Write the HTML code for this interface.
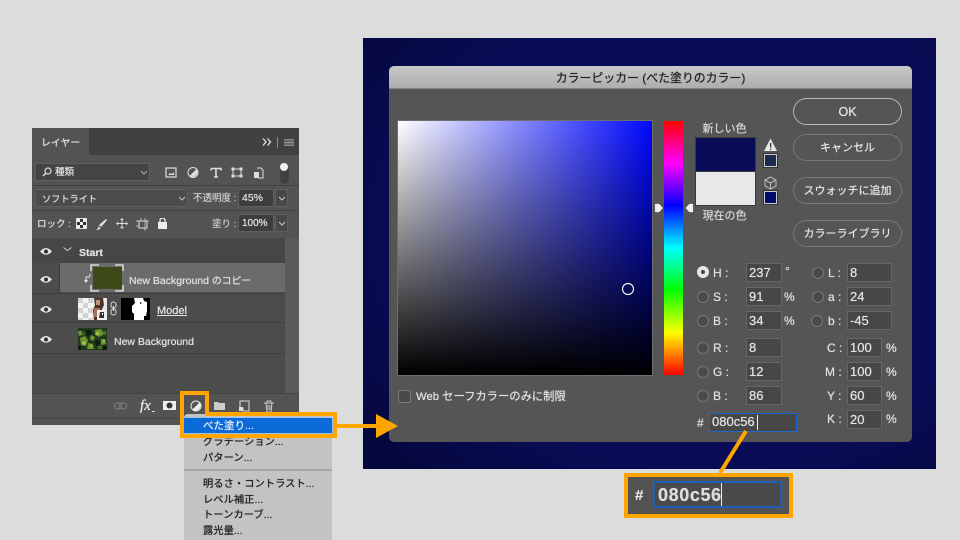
<!DOCTYPE html>
<html lang="ja"><head><meta charset="utf-8"><title>カラーピッカー</title>
<style>
html,body{margin:0;padding:0;width:960px;height:540px;overflow:hidden;background:#dcdcdc}
body{position:relative;font-family:"Liberation Sans","Noto Sans CJK JP",sans-serif;color:#e2e2e2;text-shadow:0 0 .6px currentColor}
div,span.a,svg{position:absolute}
.t{white-space:nowrap;font-size:11px;line-height:14px}
.b{font-weight:bold}
.f{background:#474747;border:1px solid #666;box-sizing:border-box;font-size:13px;line-height:17px;padding-left:2px;color:#e4e4e4;height:19px}
.r{width:12px;height:12px;border-radius:50%;border:1px solid #777;box-sizing:border-box;background:#4a4a4a}
.btn{left:793px;width:109px;height:27px;border:1.5px solid #767676;border-radius:14px;box-sizing:border-box;text-align:center;font-size:11px;line-height:26px;color:#e6e6e6}
.l{font-size:12px;line-height:14px;color:#e0e0e0;white-space:nowrap}
.m{left:203px;font-size:10.3px;line-height:14px;color:#1d1d1d;white-space:nowrap}
.o{background:#ffa500}
.sep{background:#434343;height:1px}
.dd{background:#484848;border:1px solid #5f5f5f;box-sizing:border-box;border-radius:2px}
</style></head><body>

<!-- Layers panel -->
<div style="left:32px;top:128px;width:267px;height:297px;background:#535353"></div>
<div style="left:89px;top:128px;width:210px;height:27px;background:#414141"></div>
<div class="t" style="left:41px;top:137px;font-size:9.9px">レイヤー</div>
<svg style="left:262px;top:137px" width="10" height="10" fill="none" stroke="#e4e4e4" stroke-width="1.300"><path d="M1 1.500l3 3.500-3 3.500M5.500 1.500l3 3.500-3 3.500"/></svg>
<div style="left:277px;top:137px;width:1px;height:11px;background:#888"></div>
<div style="left:284px;top:139px;width:10px;height:7px;background:linear-gradient(#8e8e8e 1px,#666 1px,#666 3px,#8e8e8e 3px,#8e8e8e 4px,#666 4px,#666 6px,#8e8e8e 6px)"></div>
<div class="dd" style="left:35px;top:163px;width:115px;height:18px;background:#444"></div>
<svg style="left:42px;top:167px" width="10" height="10" viewBox="0 0 10 10"><circle cx="6" cy="4" r="3" fill="none" stroke="#ddd" stroke-width="1.2"/><path d="M4 6L1 9" stroke="#ddd" stroke-width="1.4"/></svg>
<div class="t" style="left:55px;top:166px;font-size:9.5px">種類</div>
<svg style="left:140px;top:170px" width="8" height="5"><path d="M1 1l3 3 3-3" fill="none" stroke="#aaa"/></svg>
<!-- filter icons -->
<svg style="left:165px;top:167px" width="120" height="22" viewBox="0 0 120 22" fill="none" stroke="#ddd">
<rect x="1" y="1" width="10" height="9" stroke-width="1.2"/><path d="M3 8l2-2 2 1 2-2v3z" fill="#ddd" stroke="none"/>
<circle cx="28" cy="5.500" r="5" stroke-width="1"/><path d="M24.500 9L31.500 2A5 5 0 0 1 24.500 9z" fill="#ddd" stroke="none"/>
<path d="M46 1.500h10v2M51 1.500v8.500M49 10h4M46 1.500v2" stroke-width="1.600"/>
<rect x="68" y="2" width="8" height="7" stroke-width="1"/><rect x="66.500" y=".5" width="3" height="3" fill="#ddd" stroke="none"/><rect x="74.500" y=".5" width="3" height="3" fill="#ddd" stroke="none"/><rect x="66.500" y="7.500" width="3" height="3" fill="#ddd" stroke="none"/><rect x="74.500" y="7.500" width="3" height="3" fill="#ddd" stroke="none"/>
<path d="M92 1h4l2 2v8h-5" stroke-width="1"/><rect x="89" y="5" width="5" height="6" fill="#ddd" stroke="none"/>
</svg>
<div style="left:280px;top:165px;width:7px;height:17px;border-radius:4px;background:#3f3f3f;border:1px solid #444"></div>
<div style="left:280px;top:163px;width:8px;height:8px;border-radius:50%;background:#eee"></div>
<div class="sep" style="left:32px;top:185px;width:267px"></div>
<div class="dd" style="left:35px;top:189px;width:153px;height:18px;background:#4c4c4c"></div>
<div class="t" style="left:42px;top:192px;font-size:9.2px">ソフトライト</div>
<svg style="left:178px;top:196px" width="8" height="5"><path d="M1 1l3 3 3-3" fill="none" stroke="#bbb"/></svg>
<div class="t" style="left:193px;top:192px;font-size:9.500px;color:#ccc">不透明度 :</div>
<div class="dd" style="left:238px;top:189px;width:36px;height:18px;background:#3d3d3d"></div>
<div class="t" style="left:242px;top:191px;font-size:10.500px">45%</div>
<div class="dd" style="left:275px;top:189px;width:13px;height:18px"></div>
<svg style="left:278px;top:196px" width="8" height="5"><path d="M1 1l3 3 3-3" fill="none" stroke="#ccc"/></svg>
<div class="sep" style="left:32px;top:210px;width:267px"></div>
<div class="t" style="left:37px;top:218px;font-size:9.500px">ロック :</div>
<svg style="left:76px;top:218px" width="95" height="14" viewBox="0 0 95 14">
<rect x=".5" y=".5" width="10" height="10" fill="#333" stroke="#ddd"/><path d="M1 1h3v3H1zM7 1h3v3H7zM4 4h3v3H4zM1 7h3v3H1zM7 7h3v3H7z" fill="#eee"/>
<path d="M30 1Q26 4 23 7L25 9Q28 6 31 2zM22 8Q23 10 20 12 24 12 24.500 10z" fill="#ddd"/>
<path d="M46 0l2 2h-1.500v3H50V3.500l2 2-2 2V6h-3.500v3H48l-2 2-2-2h1.500V6H42v1.500l-2-2 2-2V5h3.500V2H44z" fill="#ddd"/>
<rect x="63" y="3" width="8" height="7" fill="none" stroke="#ddd"/><path d="M60 3h13M69 0v13M65 0v3M60 8h3" stroke="#ddd" stroke-width=".7" fill="none"/>
<rect x="82" y="4" width="9" height="7" fill="#eee"/><path d="M84 4V2.500a2.500 2.500 0 0 1 5 0V4" fill="none" stroke="#eee" stroke-width="1.300"/>
</svg>
<div class="t" style="left:212px;top:218px;font-size:9.500px;color:#ccc">塗り :</div>
<div class="dd" style="left:238px;top:214px;width:36px;height:18px;background:#3d3d3d"></div>
<div class="t" style="left:242px;top:217px;font-size:10px">100%</div>
<div class="dd" style="left:275px;top:214px;width:13px;height:18px"></div>
<svg style="left:278px;top:221px" width="8" height="5"><path d="M1 1l3 3 3-3" fill="none" stroke="#ccc"/></svg>

<!-- layers list -->
<div style="left:285px;top:238px;width:14px;height:155px;background:#5a5a5a"></div>
<div style="left:32px;top:238px;width:253px;height:25px;background:#464646"></div>
<div style="left:32px;top:263px;width:253px;height:131px;background:#4c4c4c"></div>
<div style="left:60px;top:263px;width:225px;height:29px;background:#6b6b6b"></div>
<div style="left:32px;top:293px;width:253px;height:1px;background:#3e3e3e"></div>
<div style="left:32px;top:322px;width:253px;height:1px;background:#3e3e3e"></div>
<div style="left:32px;top:353px;width:253px;height:1px;background:#3e3e3e"></div>
<div style="left:59px;top:263px;width:1px;height:30px;background:#3e3e3e"></div>
<svg style="left:40px;top:247px" width="14" height="100" viewBox="0 0 14 100" fill="#e2e2e2">
<g><path d="M0 4.500Q6-2.500 12 4.500 6 11 0 4.500z"/><circle cx="6" cy="4.500" r="2" fill="#333"/></g>
<g transform="translate(0,28)"><path d="M0 4.500Q6-2.500 12 4.500 6 11 0 4.500z"/><circle cx="6" cy="4.500" r="2" fill="#333"/></g>
<g transform="translate(0,58)"><path d="M0 4.500Q6-2.500 12 4.500 6 11 0 4.500z"/><circle cx="6" cy="4.500" r="2" fill="#333"/></g>
<g transform="translate(0,88)"><path d="M0 4.500Q6-2.500 12 4.500 6 11 0 4.500z"/><circle cx="6" cy="4.500" r="2" fill="#333"/></g>
</svg>
<svg style="left:63px;top:247px" width="9" height="5"><path d="M.5.5l4 3 4-3" fill="none" stroke="#ccc"/></svg>
<div class="t b" style="left:79px;top:246px;font-size:10.500px">Start</div>
<svg style="left:84px;top:273px" width="8" height="12"><path d="M6 1v2M6 4H2M2 4v5M.5 7L2 9l1.500-2" fill="none" stroke="#eee" stroke-width="1"/></svg>
<div style="left:93px;top:267px;width:29px;height:22px;background:#3b4a18"></div>
<svg style="left:90px;top:264px" width="34" height="28"><path d="M1 7V1h8M25 1h8v6M33 21v6h-8M9 27H1v-6" fill="none" stroke="#eee" stroke-width="1.300"/></svg>
<div class="t" style="left:129px;top:274px;font-size:10.500px">New Background <span style="font-size:9.800px">のコピー</span></div>

<div style="left:78px;top:298px;width:29px;height:22px;background:repeating-conic-gradient(#f4f4f4 0 25%,#d2d2d2 0 50%) 0 0/10px 10px"></div>
<svg style="left:78px;top:298px" width="29" height="22"><rect x="15" y="0" width="14" height="22" fill="#e8e8e8"/><path d="M16 0h9l1 7-2 4-1 11h-7l-1-10 2-5z" fill="#4a3528"/><rect x="18" y="2" width="4" height="5" fill="#c09070"/><rect x="16" y="10" width="6" height="9" fill="#a87058"/><rect x="19" y="12" width="10" height="10" fill="#f0f0f0"/><path d="M22 14h4v6h-5z" fill="#333"/><path d="M24 15h1v2h-1z" fill="#fff"/></svg>
<svg style="left:109px;top:301px" width="9" height="15"><rect x="2" y="1" width="5" height="6" rx="2.500" fill="none" stroke="#ddd"/><rect x="2" y="8" width="5" height="6" rx="2.500" fill="none" stroke="#ddd"/><path d="M4.500 5v5" stroke="#ddd"/></svg>
<div style="left:121px;top:298px;width:29px;height:22px;background:#000"></div>
<svg style="left:121px;top:298px" width="29" height="22"><path d="M13 0h9l1 3 3 1v9l-1 5h-2v4H13v-6l-2-2v-6l3-3z" fill="#fff"/><path d="M19 4l2 1-2 1z" fill="#000"/></svg>
<div class="t" style="left:157px;top:304px;font-size:11px;text-decoration:underline">Model</div>

<svg style="left:78px;top:328px" width="29" height="22" viewBox="0 0 29 22"><rect width="29" height="22" fill="#22381a"/>
<g fill="#6a9630"><path d="M2 10l5-2 3 4-2 6-5-1z"/><path d="M17 2l6-1 3 5-5 3-4-2z"/><path d="M10 15l5 1 1 5H9z"/><path d="M23 11l4 0 1 5-5 1z"/><path d="M0 3l4 0 0 4-3 1z"/><path d="M13 7l4 2-2 4-3-2z"/></g>
<g fill="#a2c04c"><path d="M5 13l3 1-1 3-3-1z"/><path d="M18 4l3 0 0 3-3 0z"/><path d="M12 17l2 0 0 2-2 0z"/><path d="M25 12l2 0 0 2-2 0z"/></g>
<g fill="#0f1a0a"><path d="M8 2l5 0 1 4-5 2z"/><path d="M17 13l4-1 1 4-4 2z"/><path d="M25 18l4 0 0 4-4 0z"/><path d="M0 18l3 0 0 4-3 0z"/></g>
<g fill="#44702a"><path d="M5 4l2 1-1 3-2-1z"/><path d="M25 3l3 0 0 4-3 0z"/><path d="M20 18l4 0 0 3-4 0z"/></g></svg>
<div class="t" style="left:114px;top:335px;font-size:10.500px">New Background</div>

<!-- Panel footer -->
<div style="left:32px;top:393px;width:267px;height:1px;background:#444"></div>
<div style="left:32px;top:418px;width:267px;height:1px;background:#444"></div>
<svg style="left:113px;top:398px" width="165" height="16" viewBox="0 0 165 16" fill="none">
<rect x="1.500" y="5" width="7" height="6" rx="3" stroke="#808080"/><rect x="6.500" y="5" width="7" height="6" rx="3" stroke="#808080"/>
<rect x="50" y="3" width="13" height="9" fill="#eee"/><circle cx="56.500" cy="7.500" r="3" fill="#333"/>
<circle cx="83" cy="8" r="5" stroke="#eee"/><path d="M79.500 11.500L86.500 4.500A5 5 0 0 1 79.500 11.500z" fill="#eee"/>
<path d="M101 4h4l1 1h6v7h-11z" fill="#ccc"/>
<path d="M127 3h9v10h-6v-3h-3z" stroke="#ddd"/><rect x="126" y="9" width="4" height="4" fill="#ddd"/>
<path d="M151 5h10M153 5l1 9h4l1-9M154 5V3h4v2M155 7v5M157 7v5" stroke="#ccc"/>
</svg>
<div class="t" style="left:140px;top:399px;font-size:15px;font-style:italic;font-family:'Liberation Serif',serif;color:#eee">fx</div>
<div style="left:152px;top:411px;width:3px;height:1px;background:#ddd"></div>

<!-- Menu -->
<div style="left:184px;top:414px;width:148px;height:126px;background:#c3c3c3;border-radius:4px 4px 0 0"></div>
<div style="left:184px;top:469px;width:148px;height:2px;background:#a6a6a6"></div>
<div class="m" style="top:436px">グラデーション...</div>
<div class="m" style="top:452px">パターン...</div>
<div class="m" style="top:478px">明るさ・コントラスト...</div>
<div class="m" style="top:494px">レベル補正...</div>
<div class="m" style="top:509px">トーンカーブ...</div>
<div class="m" style="top:525px">露光量...</div>
<div style="left:183px;top:417px;width:150px;height:17px;background:#0a6ad8;box-sizing:border-box;border:1px solid #9fbfe6"></div>
<div class="t" style="left:203px;top:419px;font-size:10.500px;color:#f2f2f2">べた塗り...</div>
<!-- Orange frames (merged outline) -->
<div class="o" style="left:180px;top:391px;width:29px;height:4px"></div>
<div class="o" style="left:180px;top:391px;width:4px;height:47px"></div>
<div class="o" style="left:205px;top:391px;width:4px;height:25px"></div>
<div class="o" style="left:205px;top:412px;width:132px;height:4px"></div>
<div class="o" style="left:333px;top:412px;width:4px;height:26px"></div>
<div class="o" style="left:180px;top:434px;width:157px;height:4px"></div>

<!-- Navy panel -->
<div style="left:363px;top:38px;width:573px;height:431px;background:radial-gradient(ellipse 75% 75% at 60% 45%,#080c56 70%,#05083f 100%)"></div>

<!-- Dialog -->
<div style="left:389px;top:66px;width:523px;height:376px;background:#555;border-radius:5px;overflow:hidden;z-index:1">
 <div style="left:0;top:0;width:523px;height:22px;background:linear-gradient(#c8c8c8,#aeaeae);border-bottom:1px solid #858585"></div>
 <div class="t" style="left:0;top:5px;width:523px;text-align:center;font-size:11.900px;color:#222">カラーピッカー (べた塗りのカラー)</div>
</div>

<div style="z-index:2;left:0;top:0;width:960px;height:540px">
 <!-- Field -->
 <div style="left:398px;top:121px;width:254px;height:254px;background:linear-gradient(to top,#000,rgba(0,0,0,0)),linear-gradient(to right,#fff,#0008ff);box-shadow:0 0 0 1px #6e6e6e"></div>
 <svg style="left:620px;top:281px" width="16" height="16"><circle cx="8" cy="8" r="5.500" fill="none" stroke="#eee" stroke-width="1.200"/></svg>
 <!-- Hue -->
 <div style="left:664px;top:121px;width:19px;height:254px;background:linear-gradient(#f00 0,#f0f 16.670%,#00f 33.330%,#0ff 50%,#0f0 66.670%,#ff0 83.330%,#f00 100%)"></div>
 <svg style="left:654px;top:202px" width="40" height="12"><path d="M.5 1.500h5l4 4.500-4 4.500h-5z" fill="#eee" stroke="#333" stroke-width=".6"/><path d="M31 6l4-4.500h4.500v9H35z" fill="#eee" stroke="#333" stroke-width=".6"/></svg>
 <!-- Swatches -->
 <div class="t" style="left:695px;top:122px;width:59px;text-align:center;font-size:11px;color:#d8d8d8">新しい色</div>
 <div style="left:696px;top:138px;width:59px;height:34px;background:#080c56;box-shadow:0 0 0 1px #3a3a3a"></div>
 <div style="left:696px;top:172px;width:59px;height:33px;background:#e7e8ea;box-shadow:0 0 0 1px #3a3a3a"></div>
 <div class="t" style="left:695px;top:209px;width:59px;text-align:center;font-size:11px;color:#d8d8d8">現在の色</div>
 <svg style="left:764px;top:138px" width="14" height="14"><path d="M6.500 .5L13 13H0z" fill="#e8e8e8"/><rect x="6" y="5" width="1.300" height="4.500" fill="#333"/><rect x="6" y="10.500" width="1.300" height="1.300" fill="#333"/></svg>
 <div style="left:764px;top:154px;width:13px;height:13px;background:#1c2b4d;border:1px solid #ccc;box-sizing:border-box;outline:1px solid #333"></div>
 <svg style="left:764px;top:176px" width="13" height="14" fill="none" stroke="#bbb"><path d="M6.500 1L12 4v6l-5.500 3L1 10V4zM1 4l5.500 3L12 4M6.500 7v6"/></svg>
 <div style="left:764px;top:191px;width:13px;height:13px;background:#000a6e;border:1px solid #ccc;box-sizing:border-box;outline:1px solid #333"></div>
 <!-- Buttons -->
 <div class="btn" style="top:98px;border-color:#b8b8b8;font-size:12.500px">OK</div>
 <div class="btn" style="top:134px">キャンセル</div>
 <div class="btn" style="top:177px">スウォッチに追加</div>
 <div class="btn" style="top:220px">カラーライブラリ</div>
 <!-- Radios & labels -->
 <div class="r" style="left:697px;top:266px;background:#e6e6e6;border-color:#e6e6e6"></div><div style="left:701px;top:270px;width:4px;height:4px;border-radius:50%;background:#444"></div>
 <div class="r" style="left:697px;top:291px"></div><div class="r" style="left:697px;top:315px"></div>
 <div class="r" style="left:697px;top:342px"></div><div class="r" style="left:697px;top:366px"></div><div class="r" style="left:697px;top:390px"></div>
 <div class="r" style="left:812px;top:267px"></div><div class="r" style="left:812px;top:291px"></div><div class="r" style="left:811px;top:315px"></div>
 <div class="l" style="left:713px;top:266px">H :</div><div class="l" style="left:713px;top:290px">S :</div><div class="l" style="left:713px;top:314px">B :</div>
 <div class="l" style="left:713px;top:341px">R :</div><div class="l" style="left:713px;top:365px">G :</div><div class="l" style="left:713px;top:389px">B :</div>
 <div class="l" style="left:828px;top:266px">L :</div><div class="l" style="left:828px;top:290px">a :</div><div class="l" style="left:828px;top:314px">b :</div>
 <div class="l" style="left:827px;top:341px">C :</div><div class="l" style="left:825px;top:365px">M :</div><div class="l" style="left:827px;top:389px">Y :</div><div class="l" style="left:827px;top:412px">K :</div>
 <div class="f" style="left:746px;top:263px;width:36px">237</div>
 <div class="f" style="left:746px;top:287px;width:36px">91</div>
 <div class="f" style="left:746px;top:311px;width:36px">34</div>
 <div class="f" style="left:746px;top:338px;width:36px">8</div>
 <div class="f" style="left:746px;top:362px;width:36px">12</div>
 <div class="f" style="left:746px;top:386px;width:36px">86</div>
 <div class="f" style="left:847px;top:263px;width:45px">8</div>
 <div class="f" style="left:847px;top:287px;width:45px">24</div>
 <div class="f" style="left:847px;top:311px;width:45px">-45</div>
 <div class="f" style="left:847px;top:338px;width:35px">100</div>
 <div class="f" style="left:847px;top:362px;width:35px">100</div>
 <div class="f" style="left:847px;top:386px;width:35px">60</div>
 <div class="f" style="left:847px;top:410px;width:35px">20</div>
 <div class="l" style="left:785px;top:264px">°</div><div class="l" style="left:784px;top:290px">%</div><div class="l" style="left:784px;top:314px">%</div>
 <div class="l" style="left:886px;top:341px">%</div><div class="l" style="left:886px;top:365px">%</div><div class="l" style="left:886px;top:389px">%</div><div class="l" style="left:886px;top:412px">%</div>
 <div class="l" style="left:697px;top:416px">#</div>
 <div class="f" style="left:709px;top:413px;width:88px;height:19px;border:1.500px solid #1c68cc;line-height:16px;padding-left:2px">080c56</div>
 <div style="left:757px;top:415px;width:1px;height:15px;background:#eee"></div>
 <!-- checkbox -->
 <div style="left:398px;top:390px;width:13px;height:13px;border:1px solid #7c7c7c;border-radius:2px;box-sizing:border-box;background:#4a4a4a"></div>
 <div class="t" style="left:416px;top:390px;font-size:11.300px">Web セーフカラーのみに制限</div>
</div>

<!-- Arrow (above dialog) -->
<div class="o" style="z-index:3;left:337px;top:424px;width:40px;height:4px"></div>
<svg style="z-index:3;left:376px;top:414px" width="22" height="24"><path d="M0 0L22 12 0 24z" fill="#ffa500"/></svg>

<!-- zoomed hex -->
<div style="z-index:3;left:624px;top:473px;width:169px;height:45px;background:#535353;border:4px solid #ffa500;box-sizing:border-box"></div>
<div class="t b" style="z-index:3;left:635px;top:487px;font-size:15px;line-height:17px">#</div>
<div style="z-index:3;left:653px;top:481px;width:129px;height:27px;border:2px solid #1f5fb8;box-sizing:border-box;background:#4a4a4a"></div>
<div class="t b" style="z-index:3;left:658px;top:485px;font-size:18px;line-height:20px;letter-spacing:.6px;color:#ddd">080c56</div>
<div style="z-index:3;left:721px;top:483px;width:1px;height:23px;background:#eee"></div>
<svg style="z-index:3;left:715px;top:430px" width="35" height="45"><path d="M31 1L5 43" stroke="#ffa500" stroke-width="4" fill="none"/></svg>
</body></html>
